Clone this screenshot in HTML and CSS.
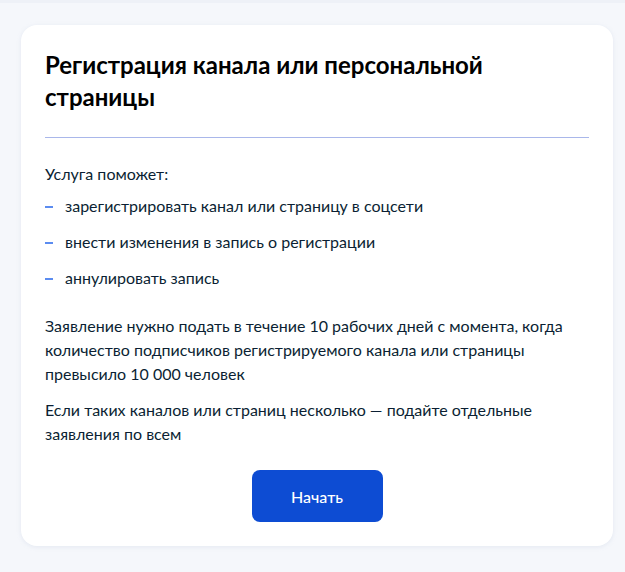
FILE: index.html
```html
<!DOCTYPE html>
<html lang="ru">
<head>
<meta charset="utf-8">
<link rel="stylesheet" href="styles.css">
</head>
<body>
<div class="topbar"></div>
<main class="card">
  <h1 class="title">Регистрация канала или персональной страницы</h1>
  <hr class="divider">
  <p class="lead">Услуга поможет:</p>
  <ul class="list">
    <li>зарегистрировать канал или страницу в соцсети</li>
    <li>внести изменения в запись о регистрации</li>
    <li>аннулировать запись</li>
  </ul>
  <p class="para">Заявление нужно подать в течение 10 рабочих дней с момента, когда количество подписчиков регистрируемого канала или страницы превысило 10&nbsp;000 человек</p>
  <p class="para">Если таких каналов или страниц несколько — подайте отдельные заявления по всем</p>
  <div class="actions">
    <button class="btn">Начать</button>
  </div>
</main>
</body>
</html>
```
FILE: styles.css
```css
html, body {
  margin: 0;
  padding: 0;
}
body {
  background: #f5f7fb;
  font-family: Lato, "Noto Sans", sans-serif;
  color: #0b1f33;
  min-height: 572px;
}
.topbar {
  height: 3px;
  background: #eef1f7;
}
.card {
  box-sizing: border-box;
  width: 592px;
  margin: 22px 0 0 21px;
  background: #fff;
  border-radius: 16px;
  padding: 24px 24px 24px;
  box-shadow: 0 1px 4px rgba(180, 190, 215, 0.25);
}
.title {
  margin: 0;
  font-size: 24px;
  line-height: 32px;
  font-weight: 700;
  color: #000;
}
.divider {
  margin: 24px 0 24px;
  border: 0;
  height: 1px;
  background: #a9b7ea;
}
.lead {
  margin: 0;
  font-size: 16px;
  line-height: 24px;
}
.list {
  list-style: none;
  margin: 8px 0 24px;
  padding: 0;
}
.list li {
  position: relative;
  padding-left: 20px;
  font-size: 16px;
  line-height: 24px;
  margin-bottom: 12px;
}
.list li:last-child {
  margin-bottom: 0;
}
.list li::before {
  content: "";
  position: absolute;
  left: 0;
  top: 12px;
  width: 8px;
  height: 2px;
  background: #5b8cf0;
}
.para {
  margin: 12px 0 0;
  font-size: 16px;
  line-height: 24px;
}
.list + .para {
  margin-top: 24px;
}
.actions {
  display: flex;
  justify-content: center;
  margin-top: 24px;
}
.btn {
  width: 131px;
  height: 52px;
  border: 0;
  border-radius: 8px;
  background: #0d4cd3;
  color: #fff;
  font-family: Lato, "Noto Sans", sans-serif;
  font-size: 16px;
  font-weight: 500;
}
```
